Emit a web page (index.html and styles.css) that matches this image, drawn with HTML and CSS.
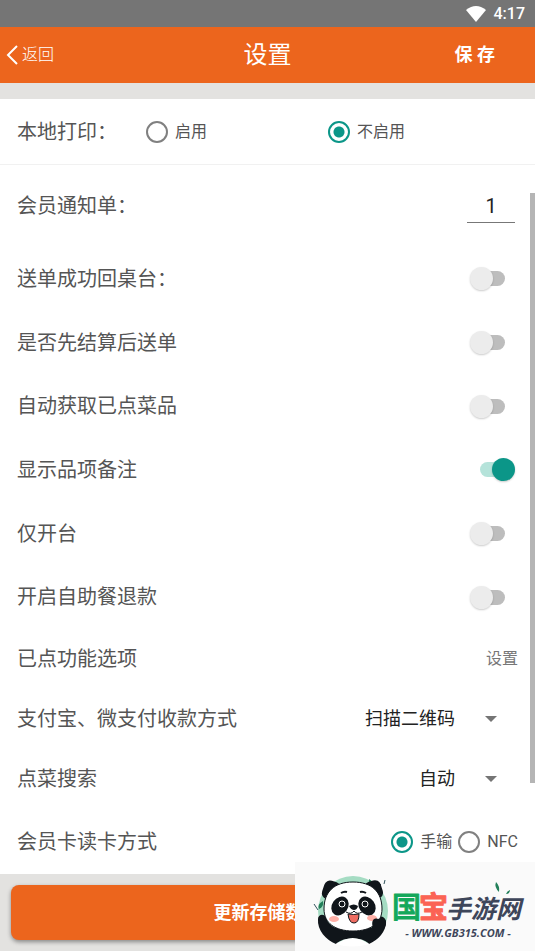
FILE: index.html
```html
<!DOCTYPE html>
<html lang="zh-CN">
<head>
<meta charset="utf-8">
<meta name="viewport" content="width=device-width, initial-scale=1">
<title>设置</title>
<link rel="stylesheet" href="styles.css">
</head>
<body>
<div class="status">
  <svg class="wifi" viewBox="0 0 20 16" aria-hidden="true"><path d="M0 4Q10-4 20 4L10 16Z"/></svg>
  <span>4:17</span>
</div>
<header class="bar">
  <a class="back" href="#"><svg viewBox="0 0 12 20" aria-hidden="true"><path d="M11 1L2 10l9 9"/></svg>返回</a>
  <h1 class="title">设置</h1>
  <button class="save" type="button">保 存</button>
</header>
<main class="panel">
  <div class="row row-print" role="radiogroup" aria-labelledby="print">
    <span id="print">本地打印：</span>
    <div class="choices">
      <label class="choice"><input class="radio" type="radio" name="print">启用</label>
      <label class="choice"><input class="radio" type="radio" name="print" checked>不启用</label>
    </div>
  </div>
  <div class="row row-notice"><label for="notice">会员通知单：</label><input class="number" id="notice" type="text" inputmode="numeric" value="1"></div>
  <div class="row row-switch"><label for="s1">送单成功回桌台：</label><input class="switch" id="s1" type="checkbox"></div>
  <div class="row row-switch"><label for="s2">是否先结算后送单</label><input class="switch" id="s2" type="checkbox"></div>
  <div class="row row-switch"><label for="s3">自动获取已点菜品</label><input class="switch" id="s3" type="checkbox"></div>
  <div class="row row-switch"><label for="s4">显示品项备注</label><input class="switch" id="s4" type="checkbox" checked></div>
  <div class="row row-switch"><label for="s5">仅开台</label><input class="switch" id="s5" type="checkbox"></div>
  <div class="row row-switch"><label for="s6">开启自助餐退款</label><input class="switch" id="s6" type="checkbox"></div>
  <div class="row"><span>已点功能选项</span><a class="link" href="#">设置</a></div>
  <div class="row"><label for="pay">支付宝、微支付收款方式</label><div class="picker"><select id="pay"><option>扫描二维码</option></select></div></div>
  <div class="row"><label for="search">点菜搜索</label><div class="picker"><select id="search"><option>自动</option></select></div></div>
  <div class="row row-card" role="radiogroup" aria-labelledby="card">
    <span id="card">会员卡读卡方式</span>
    <div class="pair">
      <label class="choice"><input class="radio" type="radio" name="card" checked>手输</label>
      <label class="choice"><input class="radio" type="radio" name="card">NFC</label>
    </div>
  </div>
</main>
<footer class="footer"><button class="update" type="button">更新存储数据</button></footer>
<div class="scrollbar"></div>
<aside class="brand">
  <svg viewBox="0 0 240 89" role="img" aria-label="国宝手游网">
    <circle cx="58" cy="49" r="35" fill="#a5dcc3"/>
    <path d="M79 28q-6-4-5-11 7 4 5 11zM24 47q-2-5 4-8 1 6-4 8z" fill="#23805a"/>
    <path d="M19 42l4 6M84 21l2 2M90 18l-1 4" stroke="#31535b" fill="none"/>
    <path d="M23 57c0-4 5-6 8-2 1 5 5 9 10 11h36c-4-5-1-12 4-10 4-3 10-1 10 4 0 10-8 18-17 22-5-7-27-7-33 0C31 78 22 68 23 57z" fill="#10151a"/>
    <path d="M41 82q17-12 33 0-17 5-33 0z" fill="#fff"/>
    <rect x="28" y="19" width="17" height="19" rx="6" transform="rotate(18 36 28)" fill="#10151a"/>
    <rect x="70" y="19" width="17" height="19" rx="6" transform="rotate(-18 78 28)" fill="#10151a"/>
    <path d="M29 47c0-17 10-27 29-27s29 10 29 27c0 14-11 22-29 22S29 61 29 47z" fill="#fff" stroke="#10151a"/>
    <ellipse cx="45" cy="44" rx="8" ry="10" transform="rotate(35 45 44)" fill="#10151a"/>
    <ellipse cx="72" cy="44" rx="8" ry="10" transform="rotate(-35 72 44)" fill="#10151a"/>
    <g fill="#10151a" stroke="#fff"><circle cx="47" cy="42" r="3"/><circle cx="70" cy="42" r="3"/></g>
    <path d="M46 31q3-2 6-1M65 30q3-1 6 1" stroke="#10151a" stroke-width="2" fill="none"/>
    <ellipse cx="39" cy="57" rx="5" ry="3" fill="#ffb0a7"/><ellipse cx="77" cy="56" rx="5" ry="3" fill="#ffb0a7"/>
    <path d="M54 44q5-3 9 0-1 4-4 4t-5-4z" fill="#10151a"/>
    <path d="M53 52q6 1 11 0 0 9-5 9t-6-9z" fill="#ee6c61" stroke="#10151a"/>
    <path d="M51 50q5 3 8-1 3 4 8 1" fill="none" stroke="#10151a"/>
    <path d="M78 66c-2-6 0-11 5-9 4-2 9 0 8 5-1 5-5 9-9 11z" fill="#10151a"/>
    <path d="M204 30q-5-5-3-10 4 4 3 10zM211 32q1-3 4-4 0 4-4 4zM207 29l3 3" fill="#23805a"/>
    <text class="brand-main brand-green" x="97" y="56">国</text>
    <text class="brand-main brand-red" x="124" y="56">宝</text>
    <text class="brand-rest" x="151" y="56">手游网</text>
    <text class="brand-url" x="163" y="75" text-anchor="middle">- WWW.GB315.COM -</text>
  </svg>
</aside>
</body>
</html>
```
FILE: styles.css
```css
* { box-sizing: border-box; }

body {
  margin: 0;
  min-height: 100vh;
  display: flex;
  flex-direction: column;
  position: relative;
  background: #e3e2e0;
  color: #555;
  font: 20px/28px Roboto, "Noto Sans CJK SC", sans-serif;
}

button, input, select { font: inherit; color: inherit; border: 0; margin: 0; padding: 0; background: none; }
a { color: inherit; text-decoration: none; }

.status {
  height: 27px;
  padding: 0 10px;
  display: flex;
  align-items: center;
  justify-content: flex-end;
  gap: 8px;
  background: #757575;
  color: #fff;
  font-size: 16px;
  font-weight: 500;
}
.wifi { width: 20px; height: 16px; fill: #fff; }

.bar {
  height: 56px;
  padding: 0 40px 0 6px;
  display: grid;
  grid-template-columns: 1fr auto 1fr;
  align-items: center;
  background: #ec651d;
  color: #fff;
}
.back { display: flex; align-items: center; gap: 4px; font-size: 16px; font-weight: 300; }
.back svg { width: 12px; height: 20px; fill: none; stroke: #fff; stroke-width: 2; }
.title { margin: 0; padding-left: 34px; font-size: 24px; font-weight: 400; }
.save { justify-self: end; font-size: 18px; font-weight: 700; }

.panel { flex: 1; margin-top: 16px; display: flex; flex-direction: column; background: #fff; }
.row {
  flex: 0 0 60px;
  padding: 0 17px;
  display: flex;
  align-items: center;
  justify-content: space-between;
}
.row-print { flex-basis: 66px; border-bottom: 1px solid #f1f1f1; }
.row-notice { flex-basis: 82px; }
.row-switch { flex: 1 0 60px; padding-right: 20px; }
.row-card { flex-basis: 65px; }

.choices { flex: 1; display: grid; grid-template-columns: 1fr 1fr; padding: 0 8px 0 29px; }
.choice { display: flex; align-items: center; gap: 7px; font-size: 16px; }
.pair { display: flex; gap: 6px; }
.radio {
  appearance: none;
  width: 22px;
  height: 22px;
  border: 2px solid #808080;
  border-radius: 50%;
}
.radio:checked { border-color: #0b9688; background: radial-gradient(circle, #0b9688 5px, transparent 6px); }

.number {
  width: 48px;
  height: 34px;
  margin-right: 3px;
  border-bottom: 1px solid #777;
  color: #222;
  text-align: center;
}

.switch { appearance: none; position: relative; width: 45px; height: 23px; }
.switch::before { content: ""; position: absolute; inset: 4px 10px; border-radius: 8px; background: #bdbdbd; }
.switch::after {
  content: "";
  position: absolute;
  top: 0;
  left: 0;
  width: 23px;
  height: 23px;
  border-radius: 50%;
  background: #ececec;
  box-shadow: 0 1px 2px #0003;
}
.switch:checked::before { background: #b5e3da; }
.switch:checked::after { left: auto; right: 0; background: #0b9688; }

.link { font-size: 16px; color: #777; }

.picker { position: relative; color: #222; font-size: 18px; }
.picker select { appearance: none; padding-right: 63px; text-align-last: right; }
.picker::after {
  content: "";
  position: absolute;
  top: 50%;
  right: 21px;
  margin-top: -3px;
  border: 6px solid transparent;
  border-top-color: #757575;
  border-bottom: 0;
}

.footer { padding: 11px; }
.update {
  display: block;
  width: 100%;
  height: 55px;
  border-radius: 8px;
  background: #ec651d;
  box-shadow: 0 2px 4px #0006;
  color: #fff;
  font-size: 18px;
  font-weight: 700;
}

.scrollbar { position: absolute; top: 193px; right: 0; width: 5px; height: 62%; background: #b5b5b5; }

.brand { position: absolute; right: 0; bottom: 0; width: 240px; background: #fafafa; }
.brand svg { display: block; width: 100%; }
.brand-main { font: 700 29px "Noto Sans CJK SC", sans-serif; stroke-width: 1px; stroke-linejoin: round; }
.brand-green { font-weight: 500; fill: #14a85b; stroke: #14a85b; }
.brand-red { fill: #fb6354; stroke: #fb6354; }
.brand-rest { font: italic 700 25px "Noto Sans CJK SC", sans-serif; fill: #3e465a; }
.brand-url { font: italic 700 11px "Open Sans", sans-serif; fill: #3e465a; }
```
